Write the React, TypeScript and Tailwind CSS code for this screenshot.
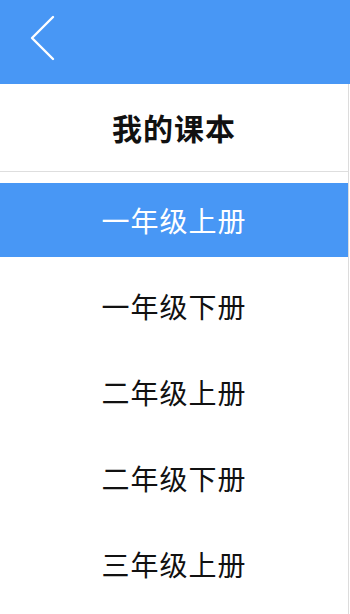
const books = ["一年级上册", "一年级下册", "二年级上册", "二年级下册", "三年级上册"];

export default function App() {
  const selected = 0;

  return (
    <div
      className="h-[614px] w-[350px] overflow-hidden bg-white"
      style={{ fontFamily: '"Noto Sans CJK SC", "Noto Sans", sans-serif' }}
    >
      <header className="flex h-[84px] items-start bg-[#4897f5] pl-[29px] pt-[15px]">
        <button type="button" aria-label="返回" className="flex h-[46px] w-[28px] items-center">
          <svg width="28" height="46" viewBox="0 0 28 46" fill="none">
            <path
              d="M24 2 L3 23 L24 44"
              stroke="white"
              strokeWidth="2.4"
              strokeLinecap="round"
              strokeLinejoin="round"
            />
          </svg>
        </button>
      </header>

      <main className="h-[530px] w-[349px] border-r border-[#dcdcdc]">
        <div className="flex h-[88px] items-center justify-center border-b border-[#dedede]">
          <h1 className="text-[30px] font-bold tracking-[1px] text-[#111]">我的课本</h1>
        </div>

        <ul className="flex flex-col gap-[12px] pt-[11px]">
          {books.map((name, i) => (
            <li
              key={name}
              className={
                i === selected
                  ? "flex h-[74px] items-center justify-center bg-[#4897f5] text-[28px] tracking-[1px] text-white"
                  : "flex h-[74px] items-center justify-center text-[28px] tracking-[1px] text-[#111]"
              }
            >
              {name}
            </li>
          ))}
        </ul>
      </main>
    </div>
  );
}
